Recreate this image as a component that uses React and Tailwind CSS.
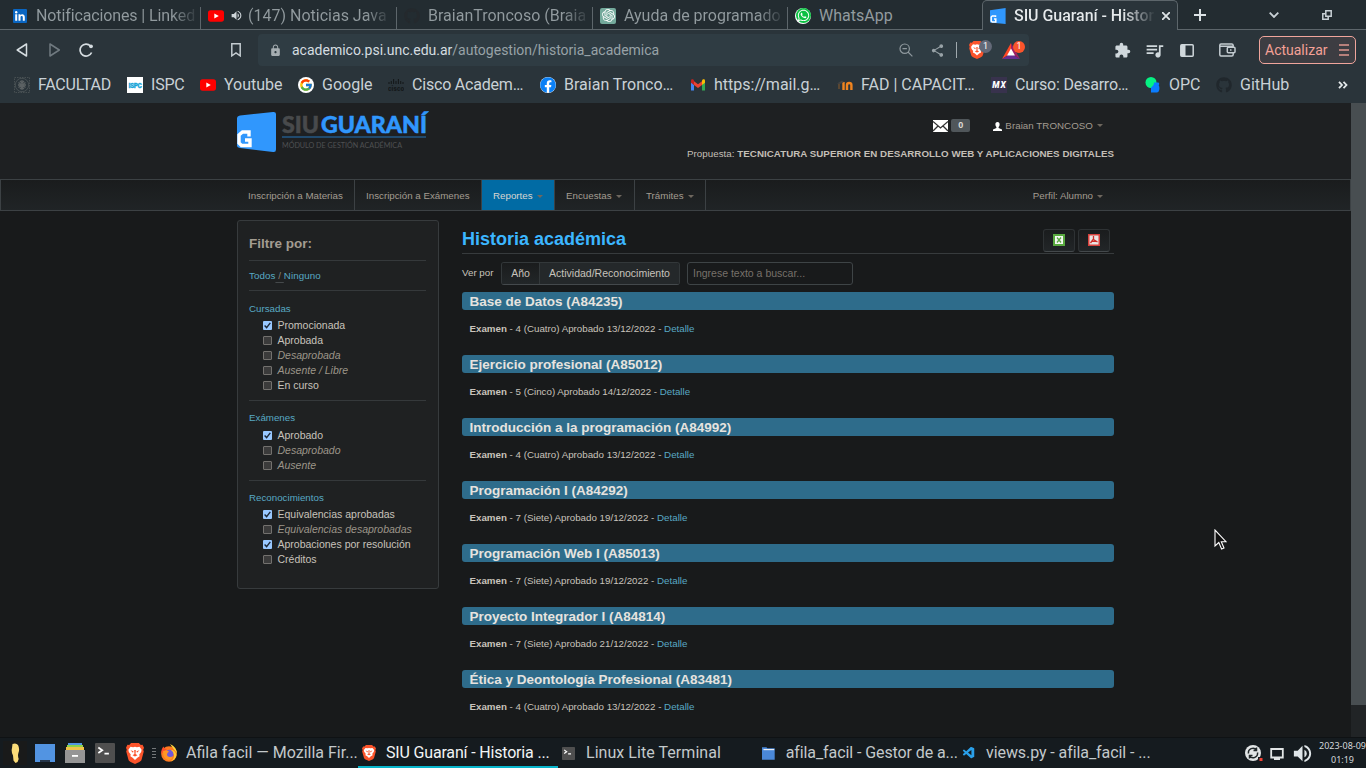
import React from 'react';
import { FaGithub, FaWhatsapp, FaFacebook } from 'react-icons/fa';
import { FcGoogle } from 'react-icons/fc';
import { SiOpenai } from 'react-icons/si';
import { MdExtension, MdQueueMusic, MdShare, MdLock, MdVolumeUp } from 'react-icons/md';
import { VscVscode } from 'react-icons/vsc';

const YouTube = () => (
  <svg width="16" height="16" viewBox="0 0 16 16"><rect y="2.3" width="16" height="11.4" rx="2.6" fill="#f00" /><path d="M6.3 5.4v5.2L10.8 8z" fill="#fff" /></svg>
);
const LinkedIn = () => (
  <svg width="14" height="14" viewBox="0 0 14 14"><rect width="14" height="14" rx="1" fill="#0a66c2" /><circle cx="3.2" cy="3.3" r="1.2" fill="#fff" /><path d="M2.2 5.3h2v6.5h-2zM5.5 5.3h1.9v.9c.9-1.6 4.4-1.5 4.4 1.7v3.9H9.800V8.400c0-1.900-2.300-1.700-2.300 0v3.400h-2z" fill="#fff" /></svg>
);
const Guarani = () => (
  <svg width="16" height="16" viewBox="0 0 16 16"><path d="M0 2.200 15.600 0v16L0 14.500z" fill="#3097fd" /><path d="M5.500 9V8H2.300L1.200 9v4l1 1h3.600v-3H4" fill="none" stroke="#fff" strokeWidth="1.500" /></svg>
);
const BraveLion = ({ s = 18, w = 16 }) => (
  <svg width={w} height={s} viewBox="0 0 16 18" preserveAspectRatio="none">
    <path d="M4.500 0h7l1.600 1.700 1.600-.1L16 4l-.7 1.700.5 1.500-2 7.100c-.2.900-1.200 1.500-1.900 2L8 18l-3.900-1.700c-.7-.5-1.700-1.100-1.900-2L.2 7.200l.5-1.500L0 4l1.300-2.400 1.600.1z" fill="#fb542b" />
    <path d="M4 3.300 6.300 3.700 8 3.300l1.700.4L12 3.300l1.900 2.400-.4 2-1.700 2.200.3 1.500-2 1.200L8 14.500l-2.100-1.900-2-1.200.3-1.500-1.700-2.200-.4-2z" fill="#fff" />
    <path d="M4 6.300 6.700 7l-.5 1.300zM12 6.300 9.300 7l.5 1.300zM7.300 6h1.400L8.500 9.500l1.700 1-2.200 1.100-2.200-1.100 1.700-1z" fill="#fb542b" />
  </svg>
);
const Crest = () => (
  <svg width="16" height="16" viewBox="0 0 16 16" fill="none" stroke="#5b6163"><rect x=".5" y=".5" width="15" height="15" strokeWidth=".6" strokeDasharray="1.500 1" /><circle cx="8" cy="8" r="6.700" strokeWidth=".6" /><path d="M8 3v10M4.500 5.500 11.500 10.500M11.500 5.500 4.500 10.500M4 8h8M6 4l2 2 2-2M6 12l2-2 2 2" strokeWidth="1.300" /></svg>
);
const Ispc = () => (
  <svg width="16" height="16" viewBox="0 0 16 16"><rect width="16" height="16" fill="#fff" /><text x="1.500" y="10.500" fontSize="6.500" fontWeight="900" fontFamily="Roboto, sans-serif" textLength="13" fill="#18a5d8" stroke="#18a5d8" strokeWidth=".3">ISPC</text></svg>
);
const Cisco = () => (
  <svg width="16" height="14" viewBox="0 0 16 14"><path d="M1 4v2M3.300 3v3M5.600 1v5M8 3v3M10.400 1v5M12.700 3v3M15 4v2" stroke="#15191b" strokeWidth="1.100" /><text x="0" y="12.500" fontSize="6.500" fontWeight="900" fontFamily="Roboto, sans-serif" textLength="16" fill="#15191b">cisco</text></svg>
);
const Gmail = () => (
  <svg width="16" height="16" viewBox="0 0 16 16"><path d="M1 4v9.500h3V8z" fill="#4285f4" /><path d="M15 4v9.500h-3V8z" fill="#34a853" /><path d="m4 4.200 4 3 4-3V8l-4 3-4-3z" fill="#ea4335" /><path d="M1 5.700V3.700C1 2.300 2.600 2 3.500 2.700L4 3.200V8z" fill="#c5221f" /><path d="M15 5.700V3.700c0-1.400-1.600-1.700-2.500-1L12 3.200V8z" fill="#fbbc04" /></svg>
);
const Moodle = () => (
  <svg width="16" height="14" viewBox="0 0 16 14"><path d="M6.500 12V4M10 12V7q0-2 2.200-2t2.200 2V12" fill="none" stroke="#f0841f" strokeWidth="2.400" /><path d="M0 5.500 5 2.500 7 4 3 6z" fill="#444" /><path d="M2 6v5" stroke="#8b5a2a" strokeWidth="1" /></svg>
);
const Mx = () => (
  <svg width="16" height="16" viewBox="0 0 16 16"><rect width="16" height="16" fill="#38324d" /><text x="1.200" y="11" fontSize="8.500" fontWeight="900" fontStyle="italic" fontFamily="Roboto, sans-serif" textLength="13.500" fill="#fff">MX</text></svg>
);
const Opc = () => (
  <svg width="16" height="16" viewBox="0 0 16 16"><circle cx="6" cy="5.500" r="5.500" fill="#05f283" /><path d="M9 5.500h4c1.500 0 1.500 2 .7 2.800 1.500 2.500.7 7.700-2.200 7.200H6V11c1-2 3-2 3-5.500z" fill="#0a7cff" /></svg>
);

const tabs = [
  { icon: <LinkedIn />, text: 'Notificaciones | Linked', box: 'w-[201px] pl-[13px]', gap: 'ml-[9px] tracking-[-0.12px]' },
  { icon: <YouTube />, audio: true, text: '(147) Noticias Java', box: 'w-[196px] pl-[7px]', gap: 'ml-[5px]' },
  { icon: <FaGithub size={16} color="#24292d" />, text: 'BraianTroncoso (Braia', box: 'w-[196px] pl-[7px]', gap: 'ml-[8px]' },
  { icon: <span className="flex h-4 w-4 items-center justify-center rounded-[2px] bg-[#74aa9c]"><SiOpenai size={13} color="#fff" /></span>, text: 'Ayuda de programado', box: 'w-[195px] pl-[7px]', gap: 'ml-[8px]' },
];

const bookmarks = [
  [<Crest />, 'FACULTAD', 'w-[113px] tracking-[-0.25px]'],
  [<Ispc />, 'ISPC', 'w-[73px] tracking-[-0.2px]'],
  [<YouTube />, 'Youtube', 'w-[98px]'],
  [<span className="flex h-4 w-4 items-center justify-center rounded-full bg-white"><FcGoogle size={14} /></span>, 'Google', 'w-[90px]'],
  [<Cisco />, 'Cisco Academ…', 'w-[152px] tracking-[-0.2px]'],
  [<span className="flex h-4 w-4 rounded-full bg-white"><FaFacebook size={16} color="#0b80f5" /></span>, 'Braian Tronco…', 'w-[150px]'],
  [<Gmail />, 'https://mail.g…', 'w-[147px]'],
  [<Moodle />, 'FAD | CAPACIT…', 'w-[154px]'],
  [<Mx />, 'Curso: Desarro…', 'w-[154px] tracking-[-0.2px]'],
  [<Opc />, 'OPC', 'w-[71px]'],
  [<FaGithub size={16} color="#20272c" />, 'GitHub', 'w-[122px]'],
];

const Caret = () => <span className="ml-[4px] inline-block border-x-[3px] border-t-[3px] border-x-transparent border-t-[#6e675e]" />;

function Chrome() {
  return (
    <div className="h-[103px] shrink-0 bg-[#2a343a] font-['Roboto',sans-serif] text-[#c9d1d6]">
      <div className="flex h-[30px] bg-[#232c31]">
        {tabs.map((t) => (
          <div key={t.text} className={`flex shrink-0 items-center border-b border-[#5d666b] pt-[2px] ${t.box}`}>
            <span className="flex w-auto shrink-0">{t.icon}</span>
            {t.audio && <MdVolumeUp className="ml-[6px] shrink-0" size={13} color="#cfd6da" />}
            <span className={`shrink-0 whitespace-nowrap bg-gradient-to-r from-[#929b9f] from-85% to-transparent to-[103%] bg-clip-text text-[16px] text-transparent ${t.gap}`}>{t.text}</span>
            <span className="ml-auto mt-[5px] h-[23px] w-px bg-[#5d666b]" />
          </div>
        ))}
        <div className="flex w-[194px] shrink-0 items-center border-b border-[#5d666b] pl-[7px] pt-[2px]">
          <span className="flex h-4 w-4 items-center justify-center rounded-full bg-[#fff]"><span className="flex h-[15px] w-[15px] items-center justify-center rounded-full bg-[#0cc143]"><FaWhatsapp size={13} color="#fff" /></span></span>
          <span className="ml-2 text-[16px] text-[#929b9f]">WhatsApp</span>
        </div>
        <div className="flex w-[196px] shrink-0 items-center rounded-t-[5px] border-x border-t border-[#5d666b] bg-[#2a343a] pl-[7px]">
          <Guarani />
          <span className="ml-[8px] w-[140px] whitespace-nowrap bg-gradient-to-r from-[#e6eaec] from-78% to-transparent to-[101%] bg-clip-text text-[16px] font-medium tracking-[-0.05px] text-transparent">SIU Guaraní - Histor</span>
          <svg className="ml-[8px]" width="8" height="8" viewBox="0 0 8 8" stroke="#dde3e6" strokeWidth="1.800"><path d="m0 0 8 8M8 0 0 8" /></svg>
        </div>
        <div className="flex flex-1 items-center border-b border-[#5d666b] pl-[16px] pt-px">
          <svg width="12" height="12" viewBox="0 0 12 12" stroke="#dde3e6" strokeWidth="2"><path d="M6 0v12M0 6h12" /></svg>
          <svg className="ml-[63px]" width="10" height="6" viewBox="0 0 10 6" fill="none" stroke="#c9d1d6" strokeWidth="1.800"><path d="m.7.700 4.300 4.300L9.300.7" /></svg>
          <svg className="ml-[43px]" width="10" height="10" viewBox="0 0 10 10" fill="none" stroke="#c9d1d6" strokeWidth="1.500"><path d="M3.800.8h5.400v5.400H3.800zM3 3.800H.8v5.400h5.400V7" /></svg>
        </div>
      </div>
      <div className="flex h-[40px] items-center pl-[16px]">
        <svg width="12" height="14" viewBox="0 0 12 14" fill="none" stroke="#d5dce0" strokeWidth="1.500" strokeLinejoin="round"><path d="M10.500 1v12L1.200 7z" /></svg>
        <svg className="ml-[21px]" width="12" height="14" viewBox="0 0 12 14" fill="none" stroke="#707a80" strokeWidth="1.500" strokeLinejoin="round"><path d="M1 1v12l9.300-6z" /></svg>
        <svg className="ml-[18px]" width="15" height="15" viewBox="0 0 15 15" fill="none" stroke="#d5dce0" strokeWidth="1.700"><path d="M12.600 9.500A6 6 0 1 1 11.500 3" /><circle cx="12" cy="3.300" r="1.900" fill="#d5dce0" stroke="none" /></svg>
        <svg className="ml-[137px]" width="10" height="14" viewBox="0 0 10 14" fill="none" stroke="#c3cbd0" strokeWidth="1.500"><path d="M.8.800h8.400v12L5 9.800l-4.200 3z" /></svg>
        <div className="ml-[17px] flex h-[32px] w-[771px] items-center rounded-[4px] bg-[#2f3c43] pl-[12px]">
          <MdLock size={13} color="#a5adb1" className="-ml-px" />
          <span className="ml-[10px] w-[607px] text-[14px] text-[#d5dce0]">academico.psi.unc.edu.ar<span className="text-[#98a2a7]">/autogestion/historia_academica</span></span>
          <svg width="14" height="14" viewBox="0 0 14 14" fill="none" stroke="#8e989d" strokeWidth="1.200"><circle cx="5.700" cy="5.700" r="4.700" /><path d="m9 9 4.400 4.400M3.500 5.700h4.400" /></svg>
          <MdShare size={15} color="#98a2a7" className="ml-[17px]" />
          <span className="ml-[11px] h-4 w-px bg-[#a0a9ae]" />
          <span className="relative ml-[12px] flex"><BraveLion s={18} w={16} /><span className="absolute -top-[1px] left-[10px] flex h-[13px] w-[13px] items-center justify-center rounded-full bg-[#636978] text-[9px] text-white">1</span></span>
          <span className="relative ml-[17px] flex"><svg width="18" height="17" viewBox="0 0 18 17"><path d="M9 1 0 17 9 11z" fill="#ff4724" /><path d="M0 17h18l-9-5.500z" fill="#662d91" /><path d="m9 1 9 16-9-6z" fill="#9e1f63" /><path d="m9 6.500 4 7H5z" fill="#fff" /></svg><span className="absolute -top-[1px] left-[11px] flex h-[12px] w-[12px] items-center justify-center rounded-full bg-[#fb542b] text-[9px] text-white">1</span></span>
        </div>
        <MdExtension size={17} color="#d0d8dc" className="ml-[85px]" />
        <MdQueueMusic size={21} color="#d0d8dc" className="ml-[13px]" />
        <svg className="ml-[15px]" width="14" height="13" viewBox="0 0 14 13"><rect x=".8" y=".8" width="12.400" height="11.400" rx="1" fill="none" stroke="#d0d8dc" strokeWidth="1.500" /><path d="M1 1h4.500v11H1z" fill="#d0d8dc" /></svg>
        <svg className="ml-[25px]" width="17" height="14" viewBox="0 0 17 14" fill="none" stroke="#c3cbd0" strokeWidth="1.500"><path d="M14.200 4V2.300Q14 1 12.800 1H2Q.8 1 .8 2.300v9.200Q.8 13 2 13h10.800q1.400 0 1.400-1.500V10M1 3.200h13" /><rect x="8.300" y="4.200" width="7.700" height="5.600" rx="1" /><path d="M11 7h1.500" /></svg>
        <div className="ml-[23px] flex h-[28px] w-[97px] items-center justify-between rounded-[5px] border border-[#f0a59c] bg-[#3d3d42] pl-[5px] pr-[6px] text-[#f5a197]">
          <span className="text-[14px]">Actualizar</span>
          <svg width="10" height="12" viewBox="0 0 10 12" stroke="#e0978f" strokeWidth="1.600"><path d="M0 1h10M0 6h10M0 11h10" /></svg>
        </div>
      </div>
      <div className="flex h-[29px] items-center pl-[14px]">
        {bookmarks.map(([icon, text, w]) => (
          <div key={text} className={`flex shrink-0 items-center ${w}`}>
            {icon}
            <span className="ml-2 whitespace-nowrap text-[16px]">{text}</span>
          </div>
        ))}
        <svg width="10" height="8" viewBox="0 0 10 8" fill="none" stroke="#e3e8ea" strokeWidth="1.800"><path d="m1 .8 3 3.200-3 3.200M5.500.800l3 3.200-3 3.200" /></svg>
      </div>
    </div>
  );
}

const Check = ({ on, text, dim }) => (
  <label className="flex h-[15px] items-center pl-[14px]">
    <span className={`flex h-[9px] w-[9px] items-center justify-center rounded-[1px] ${on ? 'bg-[#99c8ff]' : 'border border-[#73716e] bg-[#3b3b3b]'}`}>
      {on ? <svg width="7" height="7" viewBox="0 0 7 7" fill="none" stroke="#1b2735" strokeWidth="1.400"><path d="m.6 3.600 2 2L6.300.9" /></svg> : null}
    </span>
    <span className={`ml-[5.500px] whitespace-nowrap text-[10.5px] leading-[15px] ${dim ? 'italic text-[#9c9589]' : 'text-[#c8c3bc]'}`}>{text}</span>
  </label>
);

const Group = ({ title, items, cls, gap = 'mb-[2px]' }) => (
  <div className={cls}>
    <div className={`h-[14px] text-[9.75px] leading-[14px] text-[#58a9c4] ${gap}`}>{title}</div>
    {items.map(([text, on, dim]) => <Check key={text} text={text} on={on} dim={dim} />)}
  </div>
);

const subjects = [
  ['Base de Datos (A84235)', '4 (Cuatro) Aprobado 13/12/2022'],
  ['Ejercicio profesional (A85012)', '5 (Cinco) Aprobado 14/12/2022'],
  ['Introducción a la programación (A84992)', '4 (Cuatro) Aprobado 13/12/2022'],
  ['Programación I (A84292)', '7 (Siete) Aprobado 19/12/2022'],
  ['Programación Web I (A85013)', '7 (Siete) Aprobado 19/12/2022'],
  ['Proyecto Integrador I (A84814)', '7 (Siete) Aprobado 21/12/2022'],
  ['Ética y Deontología Profesional (A83481)', '4 (Cuatro) Aprobado 13/12/2022'],
];

function Header() {
  return (
    <div className="flex h-[76px] justify-between bg-[#1e2022] pl-[237px] pr-[237px]">
      <svg className="mt-[7px]" width="192" height="46" viewBox="0 0 192 46">
        <path d="M0 8.500Q0 6 3 5.500L36 2q3-.3 3 2v35.500q0 3-3 2.500L3 38q-3-.3-3-2z" fill="#3097fd" />
        <path d="M12 26.500V22H5.500L2 25v8l2.500 2.500H13V30H8" fill="none" stroke="#fff" strokeWidth="3.400" />
        <text x="45" y="23" fontFamily="Lato, sans-serif" fontWeight="900" fontSize="22.500" textLength="37" lengthAdjust="spacingAndGlyphs" fill="#484a4c" stroke="#484a4c" strokeWidth=".5">SIU</text>
        <text x="84" y="23" fontFamily="Lato, sans-serif" fontWeight="900" fontSize="22.500" textLength="106" lengthAdjust="spacingAndGlyphs" fill="#3097fd" stroke="#3097fd" strokeWidth=".5">GUARANÍ</text>
        <path d="M45 27h144" stroke="#2475b8" strokeWidth="1.200" />
        <text x="45" y="37.500" fontFamily="Lato, sans-serif" fontSize="8" textLength="120" lengthAdjust="spacingAndGlyphs" fill="#4f5052">MÓDULO DE GESTIÓN ACADÉMICA</text>
      </svg>
      <div className="flex flex-col items-end text-[9.75px] text-[#a39c91]">
        <div className="mt-[15px] flex h-[15px] items-center pr-[11px]">
          <svg width="15" height="12" viewBox="0 0 15 12"><path fill="#fff" d="M0 0h15v12H0z" /><path d="M0 1.500 7.500 8 15 1.500M0 11l5-5M15 11l-5-5" fill="none" stroke="#333" strokeWidth="1.300" /></svg>
          <span className="ml-[3px] flex h-[13px] w-[19px] items-center justify-center rounded-[2px] bg-[#50565a] text-[9px] font-bold text-[#e0ddd8]">0</span>
          <svg className="ml-[23px] mt-px" width="9" height="9" viewBox="0 0 9 9" fill="#fff"><path d="M4.500 0C6 0 6.700 1 6.600 2.500c0 1-.4 2-1 2.600v.9L9 7.500V9H0V7.500L3.400 6v-.9c-.6-.6-1-1.600-1-2.600C2.300 1 3 0 4.500 0z" /></svg>
          <span className="ml-[3px] pt-[2px] tracking-[0.04px]">Braian TRONCOSO</span><Caret />
        </div>
        <div className="mt-[14px] h-[14px] leading-[14px] tracking-[0.035px] text-[#c4bfb7]">Propuesta: <b>TECNICATURA SUPERIOR EN DESARROLLO WEB Y APLICACIONES DIGITALES</b></div>
      </div>
    </div>
  );
}

function Nav() {
  const cell = 'flex h-full items-center border-r border-[#3c4144]';
  return (
    <div className="flex h-[32px] border border-[#3c4144] bg-gradient-to-b from-[#1a1c1d] to-[#202426] pl-[236px] pr-[247px] text-[9.75px] text-[#a39c91]">
      <div className={`${cell} w-[118px] pl-[11px] pt-[2px]`}>Inscripción a Materias</div>
      <div className={`${cell} w-[127px] pl-[11px] pt-[2px]`}>Inscripción a Exámenes</div>
      <div className={`${cell} w-[73px] bg-[#016ba4] pl-[11px] pt-[2px] text-[#d9d6d1]`}>Reportes<Caret /></div>
      <div className={`${cell} w-[80px] pl-[11px] pt-[2px]`}>Encuestas<Caret /></div>
      <div className={`${cell} w-[71px] pl-[11px] pt-[2px]`}>Trámites<Caret /></div>
      <div className="ml-auto flex items-center pt-[2px]">Perfil: Alumno<Caret /></div>
    </div>
  );
}

function Sidebar() {
  return (
    <div className="h-[369px] w-[202px] shrink-0 rounded-[3px] border border-[#373b3d] bg-[#1f2122] pl-[11px] pr-[12px]">
      <div className="mt-[15px] h-[25px] border-b border-[#35393b] text-[13.5px] font-bold leading-[15px] text-[#a39c91]">Filtre por:</div>
      <div className="flex h-[30px] items-center border-b border-[#35393b] pt-[2px] text-[9.75px] tracking-[0.08px] text-[#58a9c4]">Todos<span className="whitespace-pre text-[#8b857b] underline decoration-[#45494b] underline-offset-[3px]"> / </span>Ninguno</div>
      <Group cls="mt-[11px] h-[99px] border-b border-[#35393b]" title="Cursadas" items={[['Promocionada', true], ['Aprobada'], ['Desaprobada', false, true], ['Ausente / Libre', false, true], ['En curso']]} />
      <Group cls="mt-[10px] h-[70px] border-b border-[#35393b]" gap="mb-[3px]" title="Exámenes" items={[['Aprobado', true], ['Desaprobado', false, true], ['Ausente', false, true]]} />
      <Group cls="mt-[10px]" title="Reconocimientos" items={[['Equivalencias aprobadas', true], ['Equivalencias desaprobadas', false, true], ['Aprobaciones por resolución', true], ['Créditos']]} />
    </div>
  );
}

function History() {
  const button = 'flex h-[23px] w-[32px] items-center justify-center rounded-[3px] border border-[#2e3234] border-b-[#44494c] bg-gradient-to-b from-[#1a1c1d] to-[#222628] pb-px';
  return (
    <div className="ml-[23px] w-[652px]">
      <div className="flex h-[34px] justify-between border-b border-[#373b3d] pr-[4px]">
        <h1 className="mt-[8px] text-[18px] font-bold leading-[22px] text-[#3cb6ff]">Historia académica</h1>
        <div className="mt-[9px] flex gap-[3px]">
          <span className={button}>
            <svg width="12" height="12" viewBox="0 0 12 12"><path d="M0 0h12v12H0z" fill="#58a93f" /><path d="M2 2h8v8H2z" fill="#f4f7f2" /><path d="m4 3.500 4 5M8 3.500l-4 5" stroke="#58a93f" strokeWidth="1.300" /></svg>
          </span>
          <span className={button}>
            <svg width="12" height="12" viewBox="0 0 12 12"><path d="M0 0h12v12H0z" fill="#d8413c" /><path d="M1.500 1.500h9v9h-9z" fill="#e9e4e3" /><path d="M5.500 2v3L2.500 9M5.500 5.500 9.500 8M3.500 7.300h4.500" fill="none" stroke="#cf2d28" strokeWidth="1.300" /></svg>
          </span>
        </div>
      </div>
      <div className="mt-[8px] flex h-[23px] items-center text-[9.75px] text-[#c8c3bc]">
        <span className="w-[39px]">Ver por</span>
        <div className="flex h-[23px] w-[179px] overflow-hidden rounded-[3px] border border-[#33383a] border-b-[#44494c] text-[10.5px]">
          <span className="flex w-[38px] items-center justify-center border-r border-[#33383a] bg-gradient-to-b from-[#1a1c1d] to-[#222628]">Año</span>
          <span className="flex flex-1 items-center justify-center bg-[#24282a]">Actividad/Reconocimiento</span>
        </div>
        <div className="ml-[7px] flex h-[23px] w-[166px] items-center rounded-[3px] border border-[#3e4446] bg-[#181a1b] pl-[5px] text-[10.5px] text-[#77716a]">Ingrese texto a buscar...</div>
      </div>
      <div className="mt-[7px]">
        {subjects.map(([name, detail]) => (
          <div key={name} className="h-[63px]">
            <div className="h-[18px] rounded-[3px] bg-[#2e6c8b] pl-[7.500px] text-[13.5px] font-bold leading-[19px] text-[#e6e3df]">{name}</div>
            <div className="mt-[11px] pl-[7.500px] text-[9.75px] leading-[15px] text-[#c8c3bc]"><b>Examen</b> - {detail} - <span className="text-[#58a9c4]">Detalle</span></div>
          </div>
        ))}
      </div>
    </div>
  );
}

const TermIcon = ({ s }) => (
  <svg width={s} height={s} viewBox="0 0 18 18"><rect width="18" height="18" rx="1" fill="#4f4f4f" /><path d="m3 4 3.500 2.500L3 9M8.500 9.500h4" fill="none" stroke="#fff" strokeWidth="1.600" /></svg>
);

function Taskbar() {
  return (
    <div className="flex h-[31px] shrink-0 items-center border-t border-[#0f1214] bg-[#151b1f] font-['Roboto',sans-serif] text-[16px] text-[#c3c9cb]">
      <div className="flex w-[160px] shrink-0 items-center pl-[3px]">
        <span className="flex h-[24px] w-[24px] shrink-0 items-center justify-center bg-[#191a1a]"><svg width="9" height="20" viewBox="0 0 9 20"><path d="M1.500 1Q5-.5 7 2q2 4 .4 8-.9 3 .3 6-.3 3-3.200 4l-2-2.500-.5-5Q0 9 1 5z" fill="#fbdc79" /></svg></span>
        <svg className="ml-[8px] shrink-0" width="20" height="18" viewBox="0 0 20 18"><path d="M0 0h20v18H0z" fill="#5294e2" /><path d="M5 18v-2h10v2z" fill="#26364a" /></svg>
        <svg className="ml-[10px] shrink-0" width="20" height="20" viewBox="0 0 20 20"><path d="M3 0h14v4H3z" fill="#5294e2" /><path d="M2 2h16v3H2z" fill="#8bd14b" /><path d="M1 4h18v4H1z" fill="#f0c24b" /><path d="M0 7h20v13H0z" fill="#959595" /><path d="M7 12h6v1.800H7z" fill="#fff" /></svg>
        <span className="ml-[10px] shrink-0"><TermIcon s={20} /></span>
        <span className="ml-[11px] shrink-0"><BraveLion s={21} w={18} /></span>
        <svg className="ml-[8px] shrink-0" width="4" height="11" viewBox="0 0 4 11" stroke="#737779"><path d="M0 .5h4M0 3.500h4M0 6.500h4M0 9.500h4" /></svg>
      </div>
      <div className="flex h-full w-[198px] shrink-0 items-center">
        <svg width="18" height="18" viewBox="0 0 18 18"><circle cx="9" cy="10" r="7.800" fill="#ff7a1f" /><path d="M10 0q7 3 7 10-1-3-3-4.500Q12 3 10 0z" fill="#ffd43a" /><path d="M1.200 10Q1 5 3.500 2.500 4 5 7 5z" fill="#ff4f2a" /><circle cx="9.500" cy="10" r="4.200" fill="#7059d8" /><path d="M3 7q4-1 6 .5Q7 9 7 10.500q0 2 3 2.500 2 0 3-1-1 4-5 4-5-1-5-9z" fill="#ff9624" /><path d="M11 6q4 0 5.500 5-1 5-6 6.500 4-3 3.500-6.500Q13.500 7.500 11 6z" fill="#ffc830" /></svg>
        <span className="ml-[8px] whitespace-nowrap">Afila facil — Mozilla Fir...</span>
      </div>
      <div className="flex h-full w-[200px] shrink-0 items-center border-b-2 border-[#08b5cb] pl-[4px] pt-[2px] text-[#f2f4f5]">
        <BraveLion s={16} w={14} />
        <span className="ml-[10px] whitespace-nowrap tracking-[-0.17px]">SIU Guaraní - Historia ...</span>
      </div>
      <div className="flex w-[200px] shrink-0 items-center pl-[4px]"><TermIcon s={13} /><span className="ml-[11px] tracking-[0.05px]">Linux Lite Terminal</span></div>
      <div className="flex w-[200px] shrink-0 items-center pl-[4px]">
        <svg width="13" height="13" viewBox="0 0 13 13"><path d="M0 0h4.500l1 1.200H13V13H0z" fill="#4a88d8" /><path d="M1.500 2.500h11" stroke="#e9eef5" strokeWidth="1.200" /></svg>
        <span className="ml-[11px] whitespace-nowrap tracking-[-0.09px]">afila_facil - Gestor de a...</span>
      </div>
      <div className="flex w-[287px] shrink-0 items-center pl-[4px]"><VscVscode size={14} color="#2aa0ea" /><span className="ml-[10px] whitespace-nowrap tracking-[-0.08px]">views.py - afila_facil - ...</span></div>
      <svg className="shrink-0" width="18" height="17" viewBox="0 0 18 17"><circle cx="8" cy="8" r="8" fill="#e2e5e6" /><path d="M3.500 8.500A4.500 4.500 0 0 1 11.500 5M12.500 7.500A4.500 4.500 0 0 1 4.500 11M11.500 2.500V5.500H8.500M4.500 13.500v-3h3" fill="none" stroke="#202729" strokeWidth="1.500" /><path d="M13 12h5v5h-5z" fill="#151b1f" /><rect x="14.500" y="13" width="3" height="3" fill="#f44336" /></svg>
      <svg className="ml-[7px] mt-px shrink-0" width="14" height="12" viewBox="0 0 14 12"><path d="M1.200 1h11.600v8.500H1.200z" fill="none" stroke="#e2e5e6" strokeWidth="1.800" /><path d="M4 9h6v3H4z" fill="#e2e5e6" /></svg>
      <MdVolumeUp className="ml-[7px] shrink-0" size={23} color="#dfe5e8" />
      <div className="ml-auto flex w-[47px] shrink-0 flex-col items-center font-['Noto_Sans',sans-serif] text-[9px] leading-[14px] text-[#d4d8da]"><span className="whitespace-nowrap">2023-08-09</span><span>01:19</span></div>
    </div>
  );
}

export default function App() {
  return (
    <div className="relative flex h-[768px] w-[1366px] flex-col overflow-hidden bg-[#181a1b] font-['Liberation_Sans',Arial,sans-serif]">
      <Chrome />
      <div className="flex h-[634px] shrink-0">
        <div className="w-[1351px] overflow-hidden">
          <Header />
          <Nav />
          <div className="flex pl-[237px] pt-[9px]">
            <Sidebar />
            <History />
          </div>
        </div>
        <div className="w-[15px] bg-[#212426]"><div className="h-[602px] bg-[#484e51]" /></div>
      </div>
      <Taskbar />
      <svg className="absolute left-[1214px] top-[529px]" width="13" height="22" viewBox="0 0 13 22"><path d="M1 1v16l3.800-3.500 2.800 6.500 2.400-1-2.700-6.300H12z" fill="#111" stroke="#fff" strokeWidth="1.100" /></svg>
    </div>
  );
}
